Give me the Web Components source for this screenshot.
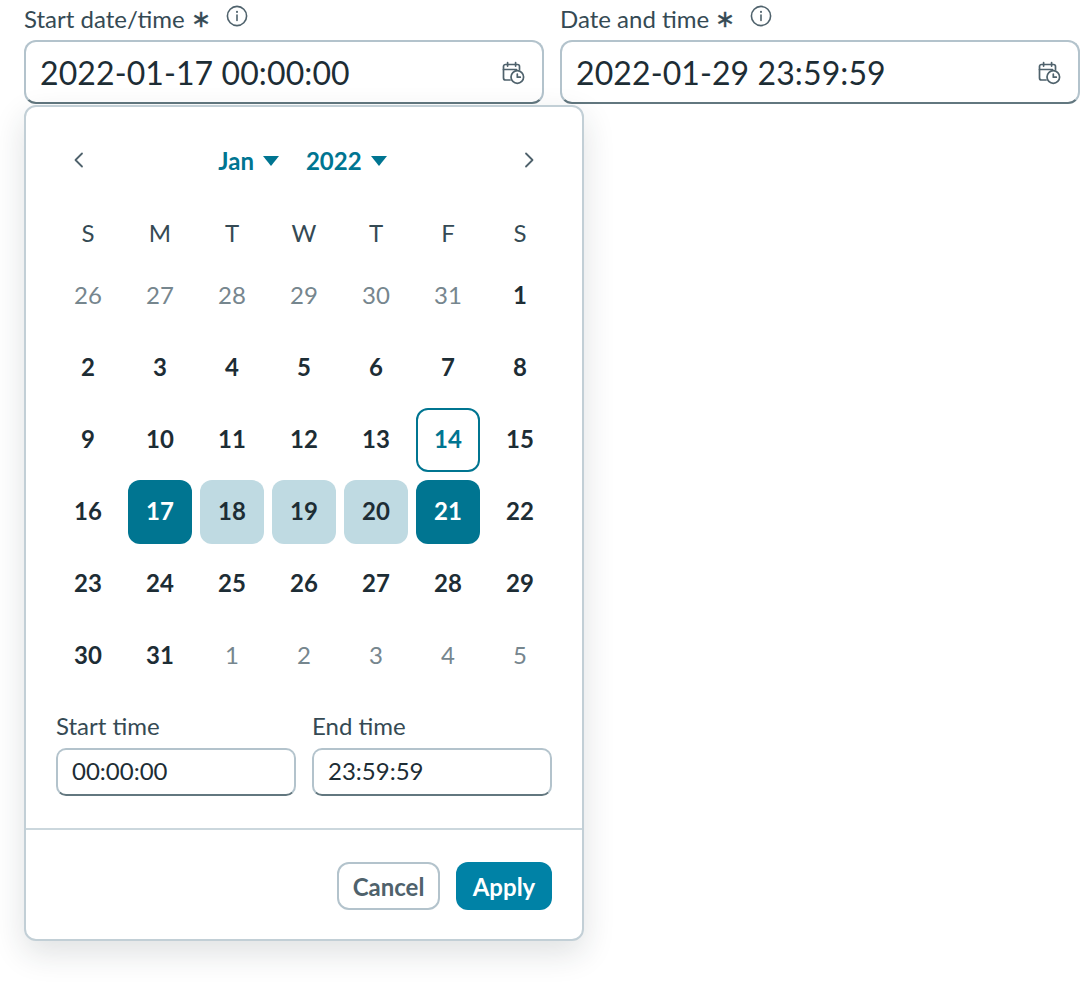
<!DOCTYPE html>
<html>
<head>
<meta charset="utf-8">
<style>
  html, body { margin: 0; padding: 0; background: #fff; }
  body { font-family: Lato, "Open Sans", sans-serif; color: #1d2d35; }
</style>
</head>
<body>
<date-range-demo></date-range-demo>

<script>
// Field label with required mark and info icon
class FieldLabel extends HTMLElement {
  constructor() {
    super();
    this.attachShadow({ mode: 'open' });
  }

  connectedCallback() {
    this.shadowRoot.innerHTML = `
      <style>
        :host { display: flex; align-items: flex-start; height: 40px; font-size: 24px; color: #354a54; }
        .row { display: flex; align-items: center; height: 40px; margin-top: -2px; }
        .star { margin-left: 6px; font-size: 24px; color: #354a54; -webkit-text-stroke: 0.3px #354a54; }
        svg { width: 22px; height: 22px; margin-left: 15px; margin-top: -4px; color: #4f626c; }
      </style>
      <div class="row">
        <span><slot></slot></span>
        <span class="star">∗</span>
        <svg viewBox="0 0 22 22" fill="none" stroke="currentColor" stroke-width="1.6" stroke-linecap="round">
          <circle cx="11" cy="11" r="9.6"></circle>
          <path d="M11 10v5.4"></path>
          <path d="M11 6.8v.1" stroke-width="2"></path>
        </svg>
      </div>
    `;
  }
}

// Large date input with calendar/clock icon
class DateField extends HTMLElement {
  constructor() {
    super();
    this.attachShadow({ mode: 'open' });
  }

  connectedCallback() {
    this.shadowRoot.innerHTML = `
      <style>
        :host { display: block; }
        .box {
          box-sizing: border-box;
          height: 64px;
          display: flex;
          align-items: center;
          justify-content: space-between;
          padding: 0 16px 0 14px;
          border: 2px solid #b3c3cc;
          border-bottom-color: #62777f;
          border-radius: 12px;
          background: #fff;
          font-size: 32px;
          letter-spacing: 0.1px;
          color: #1d2d35;
        }
        svg { width: 26px; height: 26px; margin-top: 1px; color: #4f626c; }
      </style>
      <div class="box">
        <span><slot></slot></span>
        <svg viewBox="0 0 26 26" fill="none" stroke="currentColor" stroke-width="1.7" stroke-linecap="round" stroke-linejoin="round">
          <path d="M10 20H5.5A2 2 0 0 1 3.5 18V6.5a2 2 0 0 1 2-2h12a2 2 0 0 1 2 2v3"></path>
          <path d="M3.5 9.5h13"></path>
          <path d="M7.6 2.5v3.6M15.6 2.5v3.6"></path>
          <circle cx="17.3" cy="17" r="6.3"></circle>
          <path d="M17.3 14v3.2h3"></path>
        </svg>
      </div>
    `;
  }
}

// Small labelled time input
class TimeField extends HTMLElement {
  constructor() {
    super();
    this.attachShadow({ mode: 'open' });
  }

  connectedCallback() {
    this.shadowRoot.innerHTML = `
      <style>
        :host { display: block; }
        label { display: block; height: 36px; line-height: 36px; font-size: 24px; color: #354a54; }
        .box {
          box-sizing: border-box;
          height: 48px;
          margin-top: 4px;
          padding: 0 14px 4px;
          display: flex;
          align-items: center;
          border: 2px solid #b3c3cc;
          border-bottom-color: #62777f;
          border-radius: 10px;
          font-size: 24px;
          color: #1d2d35;
        }
      </style>
      <label>${this.getAttribute('label')}</label>
      <div class="box"><slot></slot></div>
    `;
  }
}

// Month grid
class CalendarGrid extends HTMLElement {
  constructor() {
    super();
    this.attachShadow({ mode: 'open' });
    this.rangeStart = 17;
    this.rangeEnd = 21;
    this.today = 14;
  }

  connectedCallback() {
    this.render();
  }

  dayClass(day) {
    if (day === this.rangeStart || day === this.rangeEnd) return 'day selected';
    if (day > this.rangeStart && day < this.rangeEnd) return 'day between';
    if (day === this.today) return 'day today';
    return 'day';
  }

  render() {
    const head = ['S', 'M', 'T', 'W', 'T', 'F', 'S']
      .map((d) => `<div class="head">${d}</div>`).join('');
    const before = [26, 27, 28, 29, 30, 31]
      .map((d) => `<div class="day muted"><span>${d}</span></div>`).join('');
    let days = '';
    for (let d = 1; d <= 31; d++) {
      days += `<div class="${this.dayClass(d)}"><span>${d}</span></div>`;
    }
    const after = [1, 2, 3, 4, 5]
      .map((d) => `<div class="day muted"><span>${d}</span></div>`).join('');

    this.shadowRoot.innerHTML = `
      <style>
        :host { display: block; }
        .grid {
          display: grid;
          grid-template-columns: repeat(7, 64px);
          grid-auto-rows: 64px;
          gap: 8px;
        }
        .head {
          display: flex; align-items: center; justify-content: center;
          box-sizing: border-box;
          height: 64px; padding-top: 16px; font-size: 24px; color: #354a54;
        }
        .day {
          display: flex; align-items: center; justify-content: center;
          box-sizing: border-box;
          padding-bottom: 4px;
          border-radius: 12px;
          font-size: 24px;
          font-weight: 700;
          color: #1d2d35;
        }
        .muted { font-weight: 400; color: #76868e; }
        .selected { background: #007591; color: #fff; }
        .between { background: #bfdae2; }
        .today { border: 2px solid #007591; color: #007591; }
      </style>
      <div class="grid">${head}${before}${days}${after}</div>
    `;
  }
}

// Popup with month switcher, grid, times and actions
class DatePopup extends HTMLElement {
  constructor() {
    super();
    this.attachShadow({ mode: 'open' });
  }

  connectedCallback() {
    const caret = `<svg class="caret" viewBox="0 0 16 10"><path d="M0 0h16L8 10z" fill="currentColor"></path></svg>`;
    this.shadowRoot.innerHTML = `
      <style>
        :host {
          position: absolute;
          left: 24px;
          top: 105px;
          box-sizing: border-box;
          width: 560px;
          height: 836px;
          display: block;
          background: #fff;
          border: 2px solid #c2cfd6;
          border-radius: 12px;
          box-shadow: 0 12px 32px rgba(29, 45, 53, 0.14);
        }
        .nav {
          display: flex; align-items: center; justify-content: space-between;
          height: 40px; margin: 33px 30px 0;
          padding: 0 11px;
        }
        .nav > svg { width: 24px; height: 24px; color: #4f626c; }
        .pickers { display: flex; gap: 27px; margin-left: -3px; }
        .picker { display: flex; align-items: center; gap: 9px; font-size: 24px; font-weight: 700; color: #007591; }
        .caret { width: 16px; height: 10px; margin-top: 2px; }
        calendar-grid { margin: 12px 0 0 30px; }
        .times {
          display: grid;
          grid-template-columns: 240px 240px;
          gap: 16px;
          margin: 20px 30px 0;
        }
        .foot {
          margin-top: 32px;
          border-top: 2px solid #cbd7dd;
          display: flex;
          justify-content: flex-end;
          gap: 16px;
          padding: 32px 30px 0;
        }
        .btn {
          box-sizing: border-box;
          height: 48px;
          display: flex; align-items: center; justify-content: center;
          border-radius: 12px;
          font-size: 24px;
          font-weight: 700;
        }
        .cancel { width: 103px; border: 2px solid #b3c3cc; color: #4f626c; background: #fff; }
        .apply { width: 96px; background: #0082a6; color: #fff; }
      </style>
      <div class="nav">
        <svg viewBox="0 0 24 24" fill="none" stroke="currentColor" stroke-width="1.8" stroke-linecap="round" stroke-linejoin="round"><path d="M15 5.5L8.5 12l6.5 6.5"></path></svg>
        <div class="pickers">
          <div class="picker">Jan ${caret}</div>
          <div class="picker">2022 ${caret}</div>
        </div>
        <svg viewBox="0 0 24 24" fill="none" stroke="currentColor" stroke-width="1.8" stroke-linecap="round" stroke-linejoin="round"><path d="M9 5.5l6.5 6.5L9 18.5"></path></svg>
      </div>
      <calendar-grid></calendar-grid>
      <div class="times">
        <time-field label="Start time">00:00:00</time-field>
        <time-field label="End time">23:59:59</time-field>
      </div>
      <div class="foot">
        <div class="btn cancel">Cancel</div>
        <div class="btn apply">Apply</div>
      </div>
    `;
  }
}

// Page shell: the two fields and the open popup
class DateRangeDemo extends HTMLElement {
  constructor() {
    super();
    this.attachShadow({ mode: 'open' });
  }

  connectedCallback() {
    this.shadowRoot.innerHTML = `
      <style>
        :host { display: block; height: 982px; overflow: hidden; position: relative; }
        .fields {
          display: grid;
          grid-template-columns: 520px 520px;
          gap: 16px;
          padding-left: 24px;
        }
      </style>
      <div class="fields">
        <div>
          <field-label>Start date/time</field-label>
          <date-field>2022-01-17 00:00:00</date-field>
        </div>
        <div>
          <field-label>Date and time</field-label>
          <date-field>2022-01-29 23:59:59</date-field>
        </div>
      </div>
      <date-popup></date-popup>
    `;
  }
}

customElements.define('field-label', FieldLabel);
customElements.define('date-field', DateField);
customElements.define('time-field', TimeField);
customElements.define('calendar-grid', CalendarGrid);
customElements.define('date-popup', DatePopup);
customElements.define('date-range-demo', DateRangeDemo);
</script>
</body>
</html>
